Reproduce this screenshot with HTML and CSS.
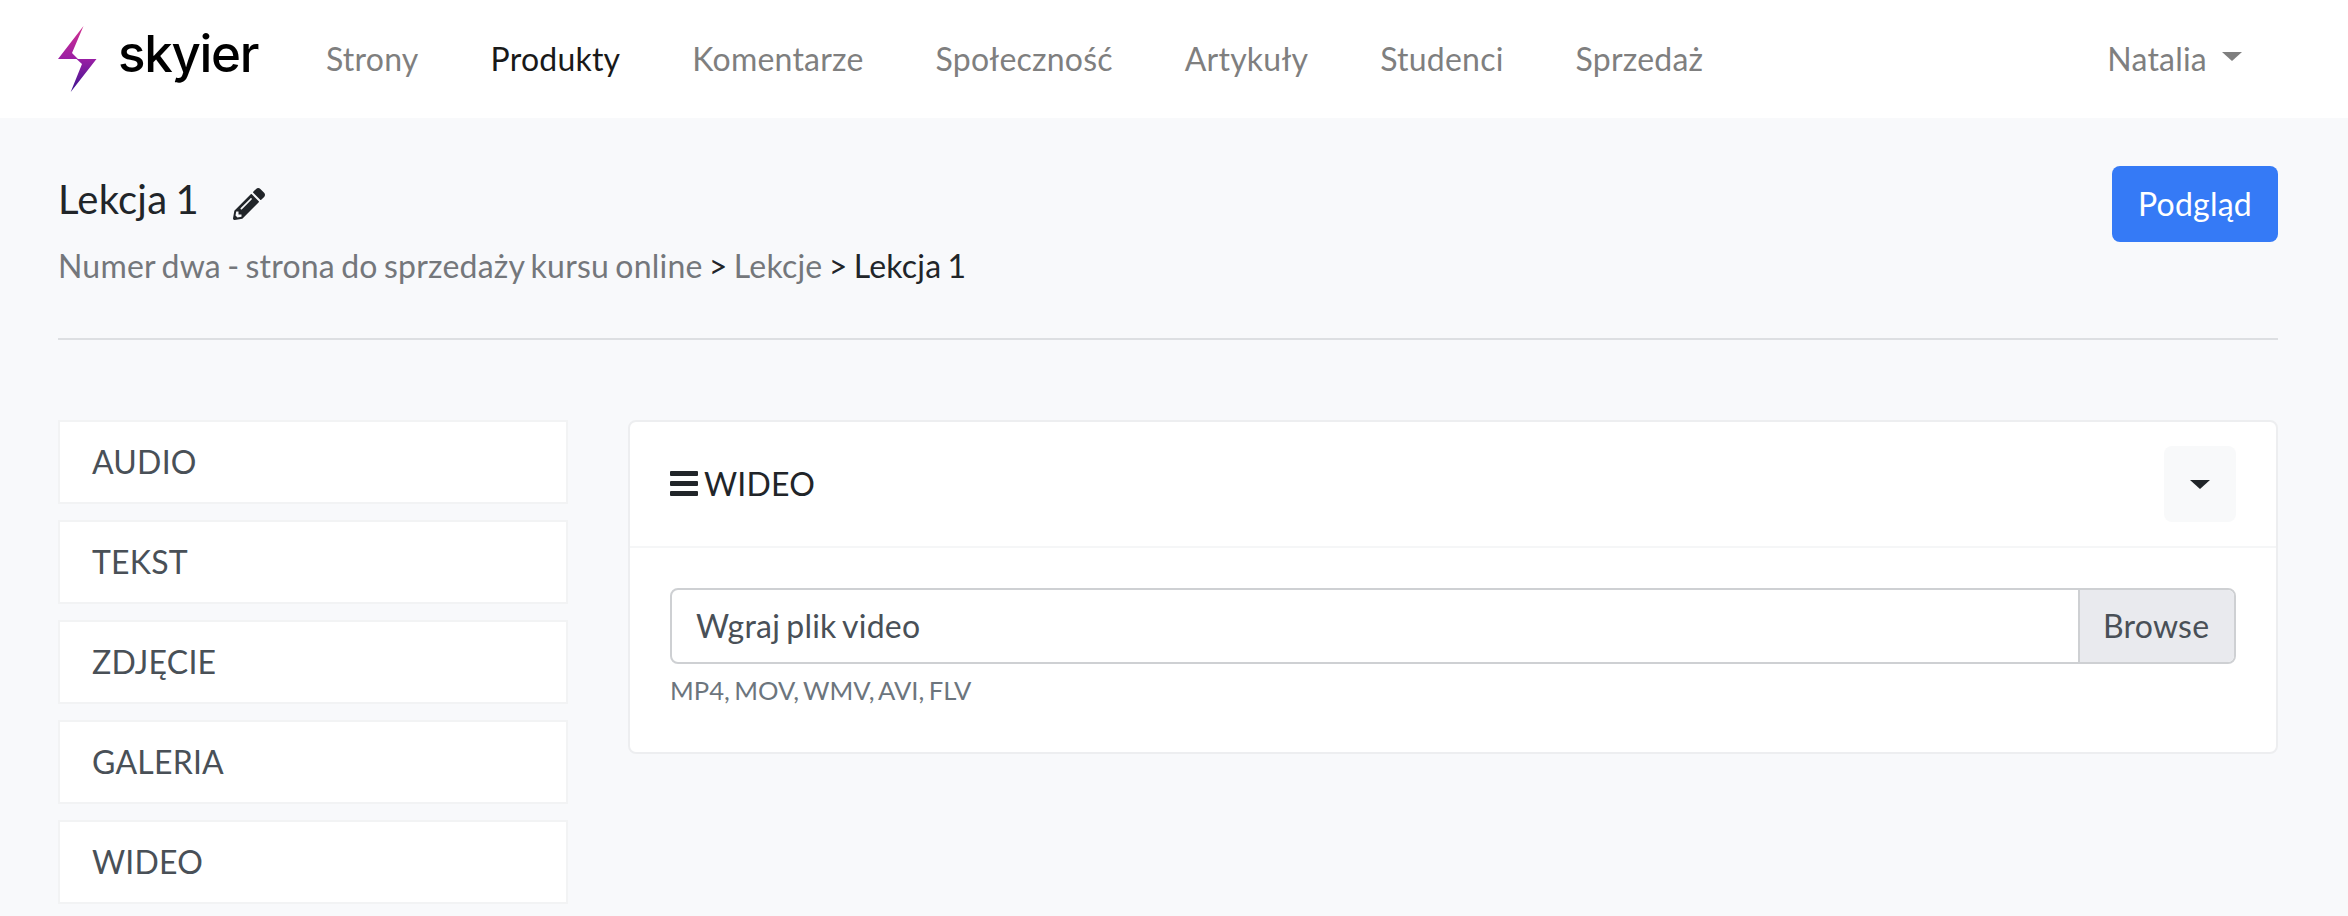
FILE: index.html
```html
<!DOCTYPE html>
<html lang="pl">
<head>
<meta charset="utf-8">
<title>Lekcja 1 - skyier</title>
<link rel="stylesheet" href="styles.css">
</head>
<body>
<header class="navbar">
  <a class="brand">
    <svg class="brand-mark" viewBox="0 0 40 68" width="40" height="68">
      <defs><linearGradient id="bolt" x1="0" y1="0" x2="0" y2="1"><stop offset="0" stop-color="#d2308f"/><stop offset=".5" stop-color="#9a1fa4"/><stop offset="1" stop-color="#3a1490"/></linearGradient></defs>
      <path fill="url(#bolt)" d="M25.500 0L0 33H18.500L24 38L12.700 66L38.500 33H20L14 27Z"/>
    </svg>
    <span class="brand-name">skyier</span>
  </a>
  <nav class="nav">
    <a>Strony</a><a class="active">Produkty</a><a>Komentarze</a><a>Społeczność</a><a>Artykuły</a><a>Studenci</a><a>Sprzedaż</a>
  </nav>
  <a class="user">Natalia<i class="caret"></i></a>
</header>
<main class="page">
  <div class="page-head">
    <div>
      <h1>Lekcja 1<svg class="pencil" viewBox="0 0 512 512" width="32" height="32"><path fill="currentColor" d="M497.900 142.100l-46.100 46.100c-4.700 4.700-12.300 4.700-17 0l-111-111c-4.700-4.700-4.700-12.300 0-17l46.100-46.100c18.700-18.700 49.100-18.700 67.900 0l60.100 60.100c18.800 18.700 18.800 49.100 0 68zM284.200 99.800L21.600 362.400.4 483.900c-2.900 16.400 11.400 30.600 27.800 27.800l121.500-21.300 262.600-262.600c4.700-4.700 4.700-12.300 0-17l-111-111c-4.800-4.700-12.400-4.700-17.100 0zM124.100 339.900c-5.500-5.500-5.500-14.300 0-19.800l154-154c5.500-5.500 14.300-5.500 19.800 0s5.500 14.300 0 19.800l-154 154c-5.500 5.500-14.300 5.500-19.800 0zM88 424h48v36.300l-64.500 11.300-31.100-31.100L51.700 376H88v48z"/></svg></h1>
      <div class="crumbs"><a>Numer dwa - strona do sprzedaży kursu online</a> &gt; <a>Lekcje</a> &gt; Lekcja 1</div>
    </div>
    <button class="btn-primary">Podgląd</button>
  </div>
  <div class="columns">
    <ul class="blocks">
      <li>AUDIO</li><li>TEKST</li><li>ZDJĘCIE</li><li>GALERIA</li><li>WIDEO</li>
    </ul>
    <section class="card">
      <div class="card-head">
        <svg class="bars" viewBox="0 0 28 26" width="28" height="26" fill="currentColor"><rect width="28" height="5" rx="1"/><rect y="10" width="28" height="5" rx="1"/><rect y="20" width="28" height="5" rx="1"/></svg>
        <span class="card-title">WIDEO</span>
        <button class="toggle"><i class="caret"></i></button>
      </div>
      <div class="card-body">
        <div class="file"><span class="file-label">Wgraj plik video</span><span class="file-browse">Browse</span></div>
        <small class="hint">MP4, MOV, WMV, AVI, FLV</small>
      </div>
    </section>
  </div>
</main>
</body>
</html>
```
FILE: styles.css
```css
* { box-sizing: border-box; }
body { margin: 0; height: 916px; overflow: hidden; background: #f8f9fb; color: #212529; font: 32px/48px Lato, sans-serif; letter-spacing: .22px; word-spacing: -2.2px; font-kerning: normal; }
button { font: inherit; letter-spacing: inherit; border: 0; }
.navbar { display: flex; align-items: flex-start; height: 118px; padding: 0 106px 0 58px; background: #fff; }
.brand { display: flex; width: 268px; }
.brand-mark { margin-top: 26px; }
.brand-name { margin: 24px 0 0 20px; color: #000; font: 500 51px/60px Inter, sans-serif; letter-spacing: -1.3px; }
.nav { display: flex; gap: 72px; padding-top: 35px; }
.nav a, .user { color: #7f7f7f; }
.nav .active { color: #191919; }
.user { display: flex; margin-left: auto; padding-top: 35px; }
.caret { width: 20px; height: 9px; border: solid transparent; border-width: 9px 10px 0; border-top-color: currentColor; }
.user .caret { margin: 17px 0 0 15px; }
.page { padding: 48px 70px 0 58px; }
.page-head { display: flex; justify-content: space-between; align-items: flex-start; height: 174px; border-bottom: 2px solid #dddfe2; }
h1 { display: flex; margin: 9px 0 0; font-size: 40px; line-height: 48px; font-weight: 400; }
.pencil { margin: 13px 0 0 34px; }
.crumbs { margin-top: 19px; }
.crumbs a { color: #74777b; }
.btn-primary { width: 166px; height: 76px; padding: 0; border-radius: 8px; background: #357af6; color: #fff; }
.columns { display: flex; align-items: flex-start; gap: 60px; margin-top: 80px; }
.blocks { display: grid; gap: 16px; width: 510px; margin: 0; padding: 0; list-style: none; }
.blocks li { height: 84px; padding: 16px 32px; border: 2px solid #f2f3f4; background: #fff; color: #495057; }
.card { flex: 1; height: 334px; border: 2px solid #edeef0; border-radius: 8px; background: #fff; }
.card-head { display: flex; align-items: center; height: 126px; padding: 0 40px; border-bottom: 2px solid #f5f6f7; }
.bars { margin-right: 6px; }
.toggle { display: flex; align-items: center; justify-content: center; width: 72px; height: 76px; margin-left: auto; padding: 0; border-radius: 8px; background: #f8f9fa; color: #212529; }
.card-body { padding: 40px; }
.file { display: flex; height: 76px; border: 2px solid #ced0d3; border-radius: 8px; overflow: hidden; color: #495057; line-height: 72px; }
.file-label { flex: 1; padding-left: 24px; }
.file-browse { width: 156px; padding-left: 23px; border-left: 2px solid #ced0d3; background: #e9eaee; }
.hint { display: block; margin-top: 7px; font-size: 25.6px; line-height: 38px; letter-spacing: 0; color: #6c757d; }
```
